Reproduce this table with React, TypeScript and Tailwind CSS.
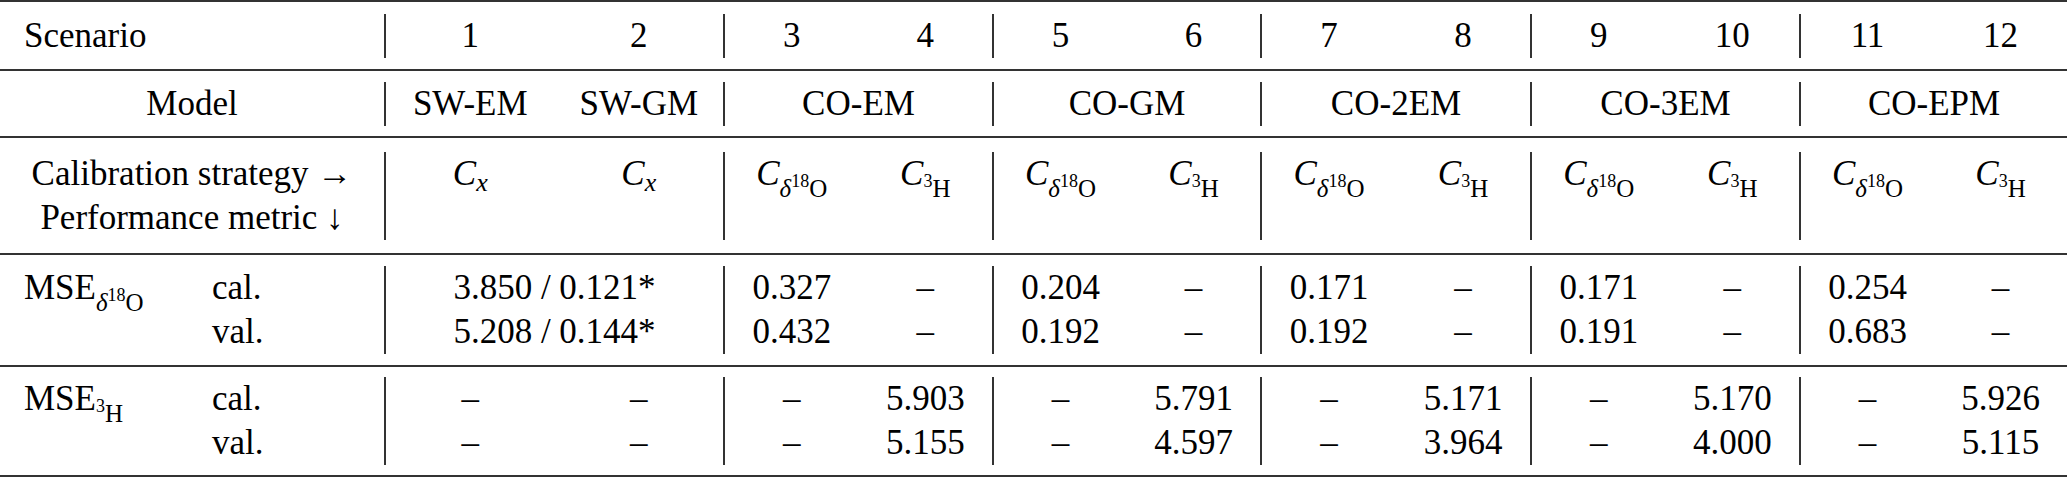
import type { ReactNode } from "react";

const groupW = ["w-[339px]", "w-[269px]", "w-[268px]", "w-[270px]", "w-[269px]", "w-[268px]"];

const scenarios = [["1", "2"], ["3", "4"], ["5", "6"], ["7", "8"], ["9", "10"], ["11", "12"]];
const models = ["CO-EM", "CO-GM", "CO-2EM", "CO-3EM", "CO-EPM"];

const mseO = [
  ["0.327", "0.432"],
  ["0.204", "0.192"],
  ["0.171", "0.192"],
  ["0.171", "0.191"],
  ["0.254", "0.683"],
];
const mseH = [
  ["5.903", "5.155"],
  ["5.791", "4.597"],
  ["5.171", "3.964"],
  ["5.170", "4.000"],
  ["5.926", "5.115"],
];

// δ¹⁸O as a subscript
function SubO() {
  return (
    <span className="relative top-[12px] text-[25px] leading-none">
      <i>δ</i>
      <span className="relative -top-[10px] text-[18px]">18</span>O
    </span>
  );
}

// ³H as a subscript
function SubH() {
  return (
    <span className="relative top-[12px] text-[25px] leading-none">
      <span className="relative -top-[10px] text-[18px]">3</span>H
    </span>
  );
}

function CO() {
  return (
    <span>
      <i>C</i>
      <SubO />
    </span>
  );
}

function CH() {
  return (
    <span>
      <i>C</i>
      <SubH />
    </span>
  );
}

function Cx() {
  return (
    <span>
      <i>C</i>
      <i className="relative top-[6px] text-[26px] leading-none">x</i>
    </span>
  );
}

function Group({ i, h, children }: { i: number; h: string; children: ReactNode }) {
  return (
    <div className={`${groupW[i]} ${h} border-l-2 border-[#333] grid grid-cols-2 text-center`}>
      {children}
    </div>
  );
}

export default function App() {
  return (
    <div className="w-[2067px] h-[479px] bg-white text-black font-['Liberation_Serif'] text-[35px] leading-[44px] border-t-2 border-[#333]">
      {/* Scenario */}
      <div className="flex items-center h-[69px] border-b-2 border-[#333]">
        <div className="w-[384px] pl-6">Scenario</div>
        {scenarios.map((s, i) => (
          <Group key={i} i={i} h="h-[44px]">
            <div>{s[0]}</div>
            <div>{s[1]}</div>
          </Group>
        ))}
      </div>

      {/* Model */}
      <div className="flex items-center h-[67px] border-b-2 border-[#333]">
        <div className="w-[384px] text-center">Model</div>
        <Group i={0} h="h-[44px]">
          <div>SW-EM</div>
          <div>SW-GM</div>
        </Group>
        {models.map((m, i) => (
          <Group key={m} i={i + 1} h="h-[44px]">
            <div className="col-span-2">{m}</div>
          </Group>
        ))}
      </div>

      {/* Calibration strategy */}
      <div className="flex items-center h-[117px] border-b-2 border-[#333]">
        <div className="w-[384px] text-center h-[88px]">
          <div>Calibration strategy →</div>
          <div>Performance metric ↓</div>
        </div>
        <Group i={0} h="h-[88px]">
          <div><Cx /></div>
          <div><Cx /></div>
        </Group>
        {models.map((m, i) => (
          <Group key={m} i={i + 1} h="h-[88px]">
            <div><CO /></div>
            <div><CH /></div>
          </Group>
        ))}
      </div>

      {/* MSE δ18O */}
      <div className="flex items-center h-[112px] border-b-2 border-[#333]">
        <div className="w-[384px] h-[88px] flex">
          <div className="w-[212px] pl-6">
            MSE
            <SubO />
          </div>
          <div>
            <div>cal.</div>
            <div>val.</div>
          </div>
        </div>
        <Group i={0} h="h-[88px]">
          <div className="col-span-2">3.850 / 0.121*</div>
          <div className="col-span-2">5.208 / 0.144*</div>
        </Group>
        {mseO.map((v, i) => (
          <Group key={i} i={i + 1} h="h-[88px]">
            <div>{v[0]}</div>
            <div>–</div>
            <div>{v[1]}</div>
            <div>–</div>
          </Group>
        ))}
      </div>

      {/* MSE 3H */}
      <div className="flex items-center h-[110px] border-b-2 border-[#333]">
        <div className="w-[384px] h-[88px] flex">
          <div className="w-[212px] pl-6">
            MSE
            <SubH />
          </div>
          <div>
            <div>cal.</div>
            <div>val.</div>
          </div>
        </div>
        <Group i={0} h="h-[88px]">
          <div>–</div>
          <div>–</div>
          <div>–</div>
          <div>–</div>
        </Group>
        {mseH.map((v, i) => (
          <Group key={i} i={i + 1} h="h-[88px]">
            <div>–</div>
            <div>{v[0]}</div>
            <div>–</div>
            <div>{v[1]}</div>
          </Group>
        ))}
      </div>
    </div>
  );
}
